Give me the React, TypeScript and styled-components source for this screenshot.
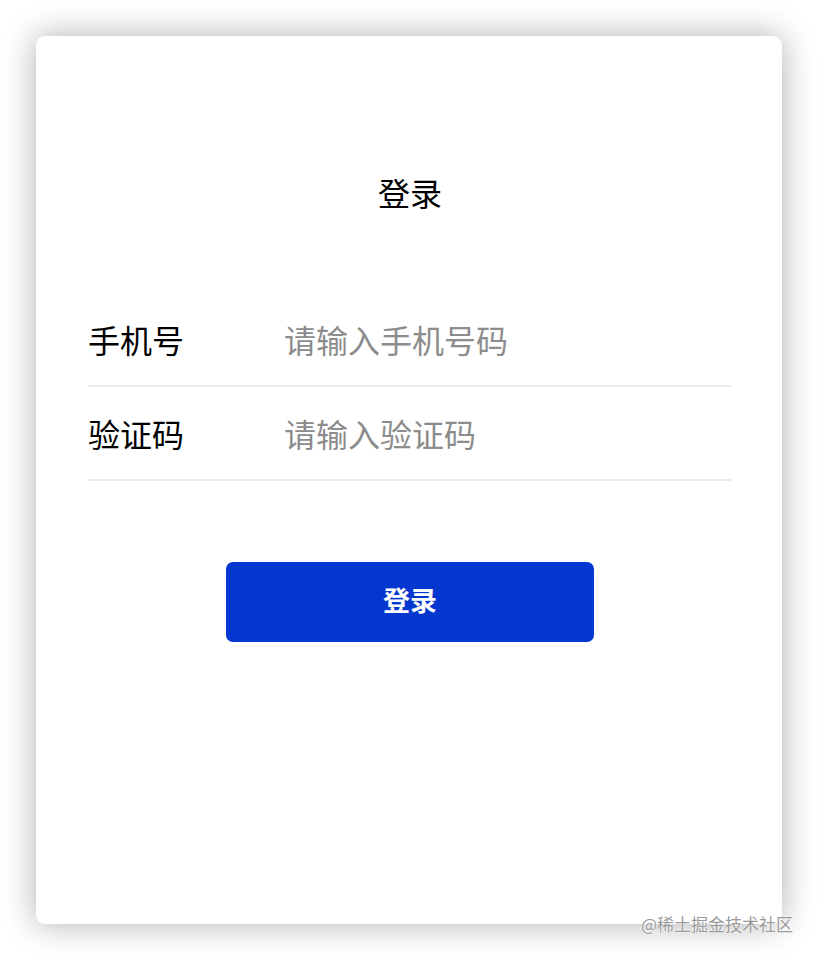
import React from "react";
import styled, { createGlobalStyle } from "styled-components";

const GlobalStyle = createGlobalStyle`
  html, body {
    margin: 0;
    padding: 0;
    background: #ffffff;
    font-family: "Noto Sans CJK SC", "Noto Sans", sans-serif;
  }
`;

const Page = styled.div`
  position: relative;
  width: 818px;
  height: 960px;
  padding: 36px;
  box-sizing: border-box;
`;

const Card = styled.div`
  width: 746px;
  height: 888px;
  box-sizing: border-box;
  background: #ffffff;
  border-radius: 9px;
  box-shadow: 0 0 34px rgba(0, 0, 0, 0.32);
  padding: 132px 50px 0 52px;
  display: flex;
  flex-direction: column;
`;

const Title = styled.h1`
  margin: 0;
  font-size: 32px;
  line-height: 48px;
  font-weight: 400;
  color: #000000;
  text-align: center;
`;

const Form = styled.div`
  margin-top: 77px;
  display: flex;
  flex-direction: column;
`;

const Row = styled.label`
  display: flex;
  align-items: center;
  height: 92px;
  border-bottom: 2px solid #ececec;
`;

const Label = styled.span`
  width: 196px;
  flex-shrink: 0;
  font-size: 32px;
  line-height: 48px;
  color: #000000;
`;

const Input = styled.input`
  flex: 1;
  border: none;
  outline: none;
  padding: 0;
  background: transparent;
  font-family: "Noto Sans CJK SC", "Noto Sans", sans-serif;
  font-size: 32px;
  line-height: 48px;
  color: #000000;
  &::placeholder {
    color: #8c8c8c;
  }
`;

const Button = styled.button`
  align-self: center;
  margin-top: 81px;
  width: 368px;
  height: 80px;
  padding: 0 0 5px;
  border: none;
  border-radius: 7px;
  background: #0437cf;
  color: #ffffff;
  font-family: "Noto Sans CJK SC", "Noto Sans", sans-serif;
  font-size: 27px;
  line-height: 40px;
  font-weight: 700;
  cursor: pointer;
`;

const Watermark = styled.div`
  position: absolute;
  right: 25px;
  top: 912px;
  font-size: 17px;
  line-height: 24px;
  color: #9a9a9a;
  text-shadow: 0 0 2px #ffffff, 0 0 1px #ffffff;
`;

export default function App() {
  return (
    <>
      <GlobalStyle />
      <Page>
        <Card>
          <Title>登录</Title>
          <Form>
            <Row>
              <Label>手机号</Label>
              <Input placeholder="请输入手机号码" />
            </Row>
            <Row>
              <Label>验证码</Label>
              <Input placeholder="请输入验证码" />
            </Row>
          </Form>
          <Button>登录</Button>
        </Card>
        <Watermark>@稀土掘金技术社区</Watermark>
      </Page>
    </>
  );
}
